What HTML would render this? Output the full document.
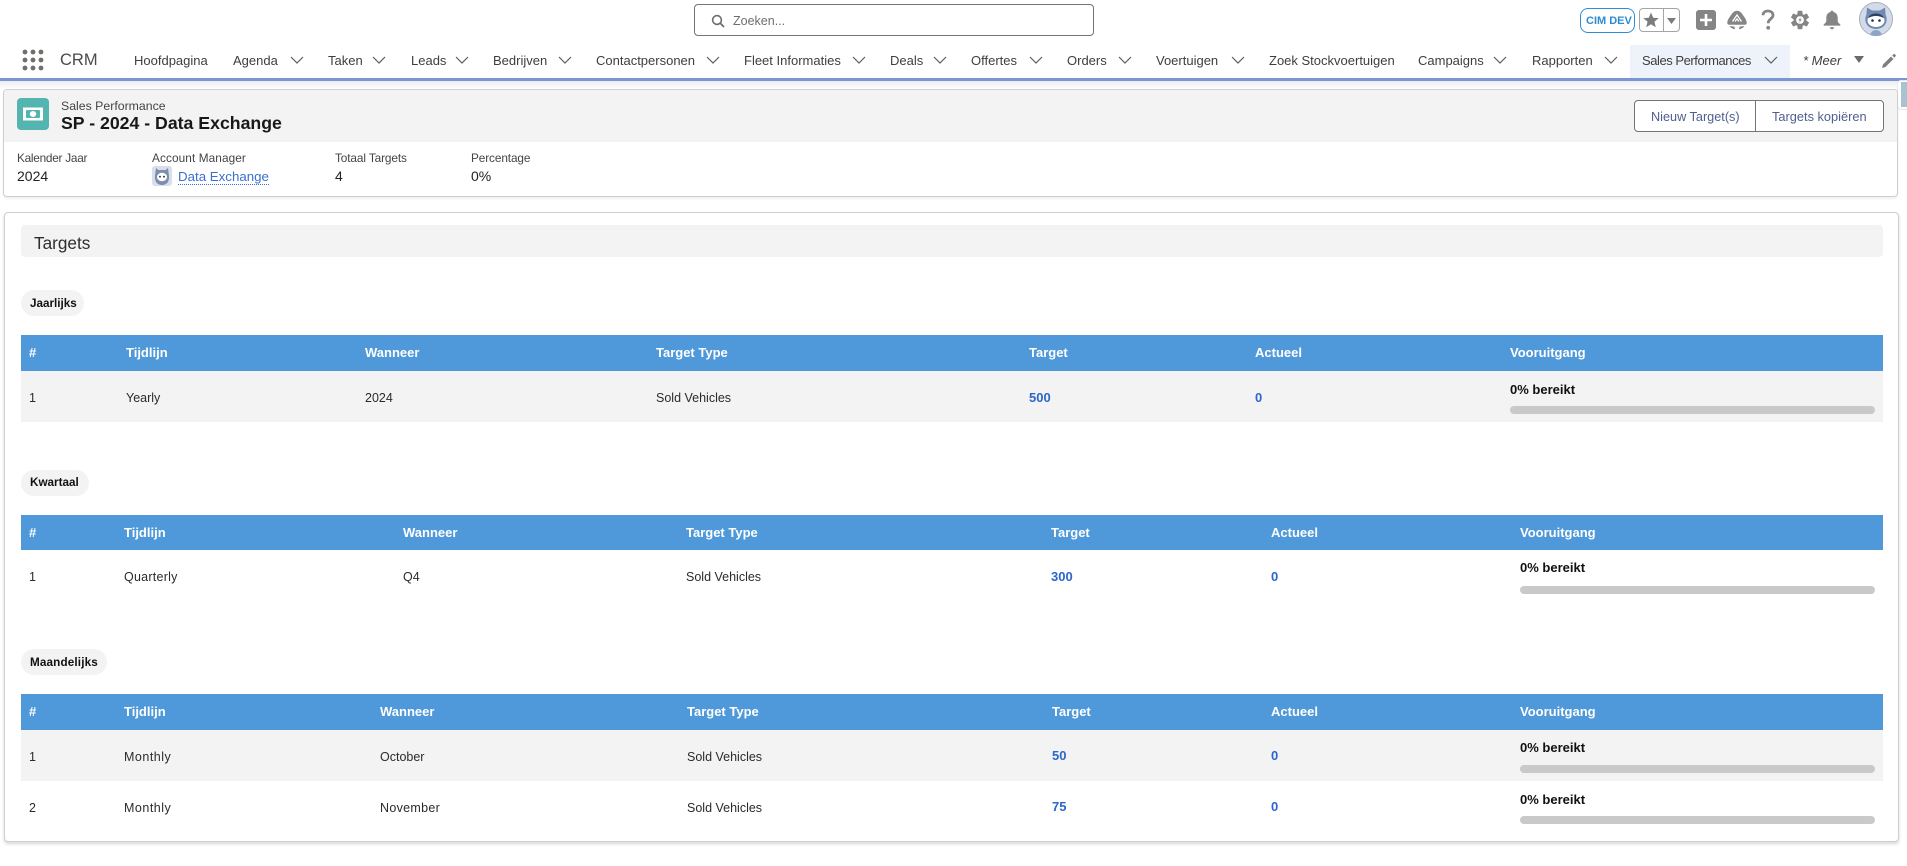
<!DOCTYPE html>
<html lang="nl">
<head>
<meta charset="utf-8">
<title>SP - 2024 - Data Exchange</title>
<style>
html,body{margin:0;padding:0;background:#fff;width:1907px;height:866px;overflow:hidden}
body{position:relative;font-family:"Liberation Sans",Arial,sans-serif;color:#181818}
.t{position:absolute;white-space:nowrap;line-height:20px;margin-top:-10px}
.b{position:absolute;box-sizing:border-box}
.n{font-size:13px;color:#3e3e3e}
.th{font-size:13px;font-weight:700;color:#fff}
.td{font-size:12.5px;color:#2b2b2b}
.lk{font-size:13px;font-weight:700;color:#2a66cc}
.pr{font-size:13px;font-weight:700;color:#111}
.pill{position:absolute;background:#f3f3f3;height:26px;border-radius:13px}
.pl{font-size:11.7px;font-weight:700;color:#111}
.bar{position:absolute;height:8px;background:#c9c9c9;border-radius:4px}
.lb{font-size:11.8px;color:#444}
.v{font-size:14px;color:#222}
svg{position:absolute;overflow:visible}
</style>
</head>
<body>

<!-- top bar -->
<div class="b" style="left:694px;top:4px;width:400px;height:32px;border:1px solid #747474;border-radius:4px;background:#fff"></div>
<svg style="left:711px;top:14px" width="14" height="14" viewBox="0 0 14 14"><circle cx="6" cy="6" r="4.4" fill="none" stroke="#706e6b" stroke-width="1.6"/><path d="M9.3 9.3L13 13" stroke="#706e6b" stroke-width="1.8"/></svg>
<span class="t" style="left:733px;top:21px;font-size:12.5px;color:#706e6b">Zoeken...</span>

<div class="b" style="left:1580px;top:8px;width:55px;height:25px;border:1px solid #2a8fd8;border-radius:8px;background:#fff"></div>
<span class="t" style="left:1586px;top:21px;font-size:11px;font-weight:700;color:#2e8bd0">CIM DEV</span>
<div class="b" style="left:1639px;top:8px;width:41px;height:24px;border:1px solid #a5a5a5;border-radius:4px;background:#fff"></div>
<div class="b" style="left:1663px;top:8px;width:1px;height:24px;background:#a5a5a5"></div>
<svg style="left:1643px;top:12px" width="16" height="16" viewBox="0 0 16 16"><path d="M8 .5L10.200 5.700 15.700 6.100 11.400 9.700 12.800 15.200 8 12.200 3.200 15.200 4.600 9.700 .3 6.100 5.800 5.700z" fill="#7c7c7c"/></svg>
<svg style="left:1667px;top:18px" width="9" height="6" viewBox="0 0 9 6"><path d="M0 0h9L4.500 6z" fill="#7c7c7c"/></svg>
<div class="b" style="left:1696px;top:10px;width:20px;height:20px;background:#858585;border-radius:3px"></div>
<svg style="left:1696px;top:10px" width="20" height="20" viewBox="0 0 20 20"><path d="M10 4v12M4 10h12" stroke="#fff" stroke-width="2.600"/></svg>
<!-- trailhead -->
<svg style="left:1727px;top:10px" width="20" height="20" viewBox="0 0 20 20"><path d="M10 .8C6.500.8 5 3.800 3.200 6.300 1.800 8.300.3 10.500.3 13c0 1.200.8 1.800 2 1.800h15.400c1.200 0 2-.6 2-1.800 0-2.500-1.500-4.700-2.900-6.700C15 3.800 13.500.8 10 .8z" fill="#858585"/><path d="M5.500 11.500L10 5l4.500 6.500M8 11.500l2-2.600 2 2.600" fill="none" stroke="#fff" stroke-width="1.300"/><path d="M2.500 16l5 .6.6 2.700c-2.400-.3-4.500-1.500-5.600-3.300zM17.500 16l-5 .6-.6 2.700c2.400-.3 4.500-1.500 5.600-3.300z" fill="#858585"/></svg>
<!-- help -->
<svg style="left:1761px;top:9px" width="14" height="22" viewBox="0 0 14 22"><path d="M2 6.300C2 3.500 4.200 2 7 2s5 1.600 5 4.200c0 3.600-4.800 3.800-4.800 8" fill="none" stroke="#858585" stroke-width="2.800"/><circle cx="7.200" cy="18.800" r="1.900" fill="#858585"/></svg>
<!-- gear -->
<svg style="left:1790px;top:10px" width="20" height="20" viewBox="0 0 20 20"><g fill="#858585"><rect x="7.500" y=".8" width="5" height="18.400" rx="1"/><rect x="7.500" y=".8" width="5" height="18.400" rx="1" transform="rotate(60 10 10)"/><rect x="7.500" y=".8" width="5" height="18.400" rx="1" transform="rotate(120 10 10)"/></g><circle cx="10" cy="10" r="5.200" fill="none" stroke="#858585" stroke-width="2.600"/><circle cx="10" cy="10" r="3.900" fill="#fff"/><path d="M11 6.800L8.300 10.500h1.800L9 13.300l2.800-4h-1.800z" fill="#858585"/></svg>
<!-- bell -->
<svg style="left:1822px;top:10px" width="20" height="20" viewBox="0 0 20 20"><path d="M10 .6c1 0 1.500.7 1.500 1.400 2.800.7 4.200 3 4.200 5.800v2.800c0 1.800 1.300 2.600 2.400 3.600.7.700.3 1.400-.6 1.400H2.500c-.9 0-1.300-.7-.6-1.400 1.100-1 2.400-1.800 2.400-3.600V7.800c0-2.800 1.400-5.100 4.200-5.800C8.500 1.300 9 .6 10 .6z" fill="#858585"/><path d="M7.800 17.200h4.400c-.2 1.300-1.100 2.100-2.200 2.100s-2-.8-2.200-2.100z" fill="#858585"/></svg>
<!-- avatar -->
<svg style="left:1859px;top:2px" width="34" height="34" viewBox="0 0 34 34"><circle cx="17" cy="17" r="16.500" fill="#d3dbe9" stroke="#a9afba"/><path d="M8 5.500l5 3h8l5-3 .6 7.500c1.200 2 1.400 5 .6 7.500-1.400 4-5.400 6.500-10.200 6.500s-8.800-2.500-10.200-6.500c-.8-2.500-.6-5.500.6-7.500z" fill="#6f8ab3"/><ellipse cx="17" cy="18.500" rx="8.500" ry="6.500" fill="#fff"/><path d="M9 16c1.500-3 4.500-4.500 8-4.500s6.500 1.500 8 4.500c-3-1-4.500-2-8-2s-5 1-8 2z" fill="#2f3f5c"/><circle cx="13.500" cy="18.500" r="1.300" fill="#1d2b45"/><circle cx="20.500" cy="18.500" r="1.300" fill="#1d2b45"/><path d="M11 33c1-3 3-5 6-5s5 2 6 5c-2 .7-4 1-6 1s-4-.3-6-1z" fill="#8ea4c6"/></svg>

<!-- nav -->
<svg style="left:22px;top:49px" width="22" height="22" viewBox="0 0 22 22"><g fill="#706e6b"><circle cx="3" cy="3" r="2.400"/><circle cx="11" cy="3" r="2.400"/><circle cx="19" cy="3" r="2.400"/><circle cx="3" cy="11" r="2.400"/><circle cx="11" cy="11" r="2.400"/><circle cx="19" cy="11" r="2.400"/><circle cx="3" cy="19" r="2.400"/><circle cx="11" cy="19" r="2.400"/><circle cx="19" cy="19" r="2.400"/></g></svg>
<span class="t" style="left:60px;top:60px;font-size:16.5px;color:#4a4a4a">CRM</span>
<div class="b" style="left:1630px;top:45px;width:160px;height:33px;background:#eef2fa"></div>
<div class="b" style="left:0;top:81px;width:1907px;height:8px;background:linear-gradient(#ececec,#fff)"></div>
<div class="b" style="left:0;top:78px;width:1907px;height:3px;background:#7a96d3"></div>

<span class="t n" style="left:134px;top:61px">Hoofdpagina</span>
<span class="t n" style="left:233px;top:61px">Agenda</span>
<span class="t n" style="left:328px;top:61px">Taken</span>
<span class="t n" style="left:411px;top:61px">Leads</span>
<span class="t n" style="left:493px;top:61px">Bedrijven</span>
<span class="t n" style="left:596px;top:61px">Contactpersonen</span>
<span class="t n" style="left:744px;top:61px">Fleet Informaties</span>
<span class="t n" style="left:890px;top:61px">Deals</span>
<span class="t n" style="left:971px;top:61px">Offertes</span>
<span class="t n" style="left:1067px;top:61px">Orders</span>
<span class="t n" style="left:1156px;top:61px">Voertuigen</span>
<span class="t n" style="left:1269px;top:61px">Zoek Stockvoertuigen</span>
<span class="t n" style="left:1418px;top:61px">Campaigns</span>
<span class="t n" style="left:1532px;top:61px">Rapporten</span>
<span class="t n" style="left:1642px;top:61px;letter-spacing:-.45px">Sales Performances</span>
<span class="t n" style="left:1803px;top:61px;font-style:italic">* Meer</span>

<svg style="left:0;top:0" width="1907" height="80" viewBox="0 0 1907 80"><g fill="none" stroke="#5c5c5c" stroke-width="1.200">
<path d="M291 57l6 6 6-6"/><path d="M373 57l6 6 6-6"/><path d="M456 57l6 6 6-6"/><path d="M559 57l6 6 6-6"/><path d="M707 57l6 6 6-6"/><path d="M853 57l6 6 6-6"/><path d="M934 57l6 6 6-6"/><path d="M1030 57l6 6 6-6"/><path d="M1119 57l6 6 6-6"/><path d="M1232 57l6 6 6-6"/><path d="M1494 57l6 6 6-6"/><path d="M1605 57l6 6 6-6"/><path d="M1765 57l6 6 6-6"/></g>
<path d="M1854 56h10l-5 7z" fill="#6b6b6b"/>
<path d="M1882 68l1-3.500 8-8 2.500 2.500-8 8zM1892.200 55.500l1.300-1.300c.4-.4.9-.4 1.300 0l.8.8c.4.400.4.900 0 1.300l-1.300 1.300z" fill="#807e7b"/></svg>

<!-- side tab -->
<div class="b" style="left:1897px;top:80px;width:10px;height:30px;background:#fff;border-radius:4px 0 0 4px;border:1px solid #e8e8e8;border-right:0"></div>
<div class="b" style="left:1901px;top:82px;width:6px;height:25px;background:#a9c2d2"></div>

<!-- highlights panel -->
<div class="b" style="left:3px;top:89px;width:1895px;height:108px;background:#fff;border:1px solid #cfcfcf;border-radius:4px;box-shadow:0 2px 2px rgba(0,0,0,.06)"></div>
<div class="b" style="left:4px;top:90px;width:1893px;height:52px;background:#f3f3f3;border-radius:3px 3px 0 0"></div>
<div class="b" style="left:17px;top:98px;width:32px;height:32px;background:#54b5b0;border-radius:4px"></div>
<svg style="left:17px;top:98px" width="32" height="32" viewBox="0 0 32 32"><rect x="6" y="9.500" width="20" height="13" fill="#fff"/><rect x="9" y="12" width="14" height="8" fill="#54b5b0" rx="1"/><ellipse cx="16" cy="16" rx="3.200" ry="3" fill="#fff"/></svg>
<span class="t" style="left:61px;top:106px;font-size:12.3px;color:#444">Sales Performance</span>
<span class="t" style="left:61px;top:123px;font-size:17.7px;font-weight:700;color:#181818">SP - 2024 - Data Exchange</span>

<div class="b" style="left:1634px;top:100px;width:250px;height:32px;background:#fff;border:1px solid #747474;border-radius:4px"></div>
<div class="b" style="left:1755px;top:100px;width:1px;height:32px;background:#747474"></div>
<span class="t" style="left:1651px;top:117px;font-size:12.7px;color:#4f5f8f">Nieuw Target(s)</span>
<span class="t" style="left:1772px;top:117px;font-size:12.8px;color:#4f5f8f">Targets kopiëren</span>

<span class="t lb" style="left:17px;top:158px;letter-spacing:-.25px">Kalender Jaar</span>
<span class="t lb" style="left:152px;top:158px;letter-spacing:.1px">Account Manager</span>
<span class="t lb" style="left:335px;top:158px;letter-spacing:-.1px">Totaal Targets</span>
<span class="t lb" style="left:471px;top:158px;letter-spacing:-.1px">Percentage</span>
<span class="t v" style="left:17px;top:176px">2024</span>
<svg style="left:152px;top:166px" width="20" height="20" viewBox="0 0 20 20"><rect width="20" height="20" rx="3" fill="#d9deea"/><path d="M4 2l2.500 2h7L16 2l.6 5c.8 4 .6 7-1 9.500-1.400 1.700-3.400 2.500-5.600 2.500s-4.200-.8-5.600-2.500c-1.600-2.500-1.800-5.500-1-9.500z" fill="#7b8fb0"/><ellipse cx="10" cy="11" rx="5" ry="4.200" fill="#fff"/><circle cx="8" cy="10.700" r=".9" fill="#223"/><circle cx="12" cy="10.700" r=".9" fill="#223"/></svg>
<span class="t" style="left:178px;top:177px;font-size:13.3px;color:#3b6fd0">Data Exchange</span>
<div class="b" style="left:178px;top:184px;width:91px;height:0;border-top:1px dotted #3b6fd0"></div>
<span class="t v" style="left:335px;top:176px">4</span>
<span class="t v" style="left:471px;top:176px">0%</span>

<!-- main card -->
<div class="b" style="left:4px;top:212px;width:1895px;height:630px;background:#fff;border:1px solid #cfcfcf;border-radius:4px;box-shadow:0 2px 3px rgba(0,0,0,.16)"></div>
<div class="b" style="left:21px;top:225px;width:1862px;height:32px;background:#f3f3f3;border-radius:4px"></div>
<span class="t" style="left:34px;top:243px;font-size:17.2px;color:#2e2e2e">Targets</span>

<!-- Jaarlijks -->
<div class="pill" style="left:21px;top:290px;width:63px"></div>
<span class="t pl" style="left:30px;top:304px">Jaarlijks</span>
<div class="b" style="left:21px;top:335px;width:1862px;height:36px;background:#4f98d9"></div>
<div class="b" style="left:21px;top:371px;width:1862px;height:51px;background:#f3f3f3"></div>
<span class="t th" style="left:29px;top:353px">#</span>
<span class="t th" style="left:126px;top:353px">Tijdlijn</span>
<span class="t th" style="left:365px;top:353px">Wanneer</span>
<span class="t th" style="left:656px;top:353px">Target Type</span>
<span class="t th" style="left:1029px;top:353px">Target</span>
<span class="t th" style="left:1255px;top:353px">Actueel</span>
<span class="t th" style="left:1510px;top:353px">Vooruitgang</span>
<span class="t td" style="left:29px;top:398px">1</span>
<span class="t td" style="left:126px;top:398px">Yearly</span>
<span class="t td" style="left:365px;top:398px">2024</span>
<span class="t td" style="left:656px;top:398px">Sold Vehicles</span>
<span class="t lk" style="left:1029px;top:398px">500</span>
<span class="t lk" style="left:1255px;top:398px">0</span>
<span class="t pr" style="left:1510px;top:390px">0% bereikt</span>
<div class="bar" style="left:1510px;top:406px;width:365px"></div>

<!-- Kwartaal -->
<div class="pill" style="left:21px;top:470px;width:68px"></div>
<span class="t pl" style="left:30px;top:483px">Kwartaal</span>
<div class="b" style="left:21px;top:515px;width:1862px;height:35px;background:#4f98d9"></div>
<span class="t th" style="left:29px;top:533px">#</span>
<span class="t th" style="left:124px;top:533px">Tijdlijn</span>
<span class="t th" style="left:403px;top:533px">Wanneer</span>
<span class="t th" style="left:686px;top:533px">Target Type</span>
<span class="t th" style="left:1051px;top:533px">Target</span>
<span class="t th" style="left:1271px;top:533px">Actueel</span>
<span class="t th" style="left:1520px;top:533px">Vooruitgang</span>
<span class="t td" style="left:29px;top:577px">1</span>
<span class="t td" style="left:124px;top:577px;letter-spacing:.25px">Quarterly</span>
<span class="t td" style="left:403px;top:577px">Q4</span>
<span class="t td" style="left:686px;top:577px">Sold Vehicles</span>
<span class="t lk" style="left:1051px;top:577px">300</span>
<span class="t lk" style="left:1271px;top:577px">0</span>
<span class="t pr" style="left:1520px;top:568px">0% bereikt</span>
<div class="bar" style="left:1520px;top:586px;width:355px"></div>

<!-- Maandelijks -->
<div class="pill" style="left:21px;top:649px;width:86px"></div>
<span class="t pl" style="left:30px;top:663px;letter-spacing:.15px">Maandelijks</span>
<div class="b" style="left:21px;top:694px;width:1862px;height:36px;background:#4f98d9"></div>
<div class="b" style="left:21px;top:730px;width:1862px;height:51px;background:#f3f3f3"></div>
<span class="t th" style="left:29px;top:712px">#</span>
<span class="t th" style="left:124px;top:712px">Tijdlijn</span>
<span class="t th" style="left:380px;top:712px">Wanneer</span>
<span class="t th" style="left:687px;top:712px">Target Type</span>
<span class="t th" style="left:1052px;top:712px">Target</span>
<span class="t th" style="left:1271px;top:712px">Actueel</span>
<span class="t th" style="left:1520px;top:712px">Vooruitgang</span>
<span class="t td" style="left:29px;top:757px">1</span>
<span class="t td" style="left:124px;top:757px;letter-spacing:.5px">Monthly</span>
<span class="t td" style="left:380px;top:757px">October</span>
<span class="t td" style="left:687px;top:757px">Sold Vehicles</span>
<span class="t lk" style="left:1052px;top:756px">50</span>
<span class="t lk" style="left:1271px;top:756px">0</span>
<span class="t pr" style="left:1520px;top:748px">0% bereikt</span>
<div class="bar" style="left:1520px;top:765px;width:355px"></div>
<span class="t td" style="left:29px;top:808px">2</span>
<span class="t td" style="left:124px;top:808px;letter-spacing:.5px">Monthly</span>
<span class="t td" style="left:380px;top:808px;letter-spacing:.3px">November</span>
<span class="t td" style="left:687px;top:808px">Sold Vehicles</span>
<span class="t lk" style="left:1052px;top:807px">75</span>
<span class="t lk" style="left:1271px;top:807px">0</span>
<span class="t pr" style="left:1520px;top:800px">0% bereikt</span>
<div class="bar" style="left:1520px;top:816px;width:355px"></div>

</body>
</html>
